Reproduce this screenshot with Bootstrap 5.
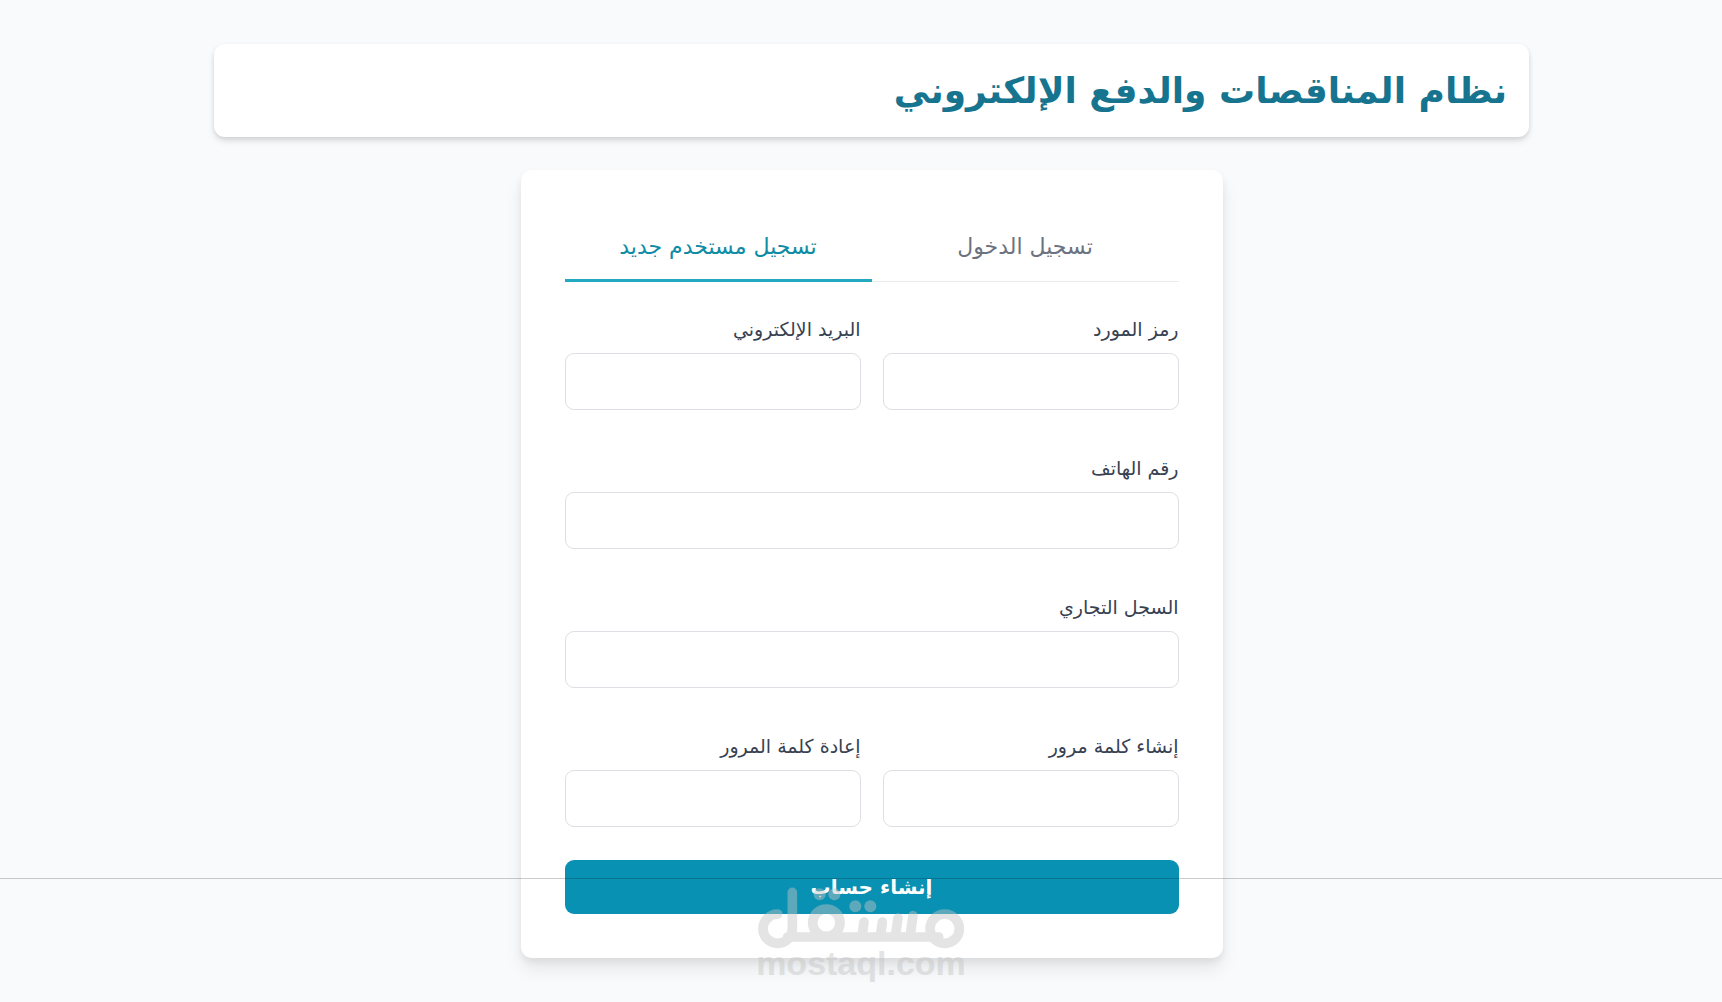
<!DOCTYPE html>
<html lang="ar" dir="rtl">
<head>
<meta charset="utf-8">
<meta name="viewport" content="width=device-width, initial-scale=1">
<title>نظام المناقصات والدفع الإلكتروني</title>
<link rel="stylesheet" href="https://cdn.jsdelivr.net/npm/bootstrap@5.3.0/dist/css/bootstrap.min.css">
<style>
body { background: #f8fafc; color: #374151; font-family: "DejaVu Sans", sans-serif; padding-left: 21px; }
.page-shell { max-width: 1315px; padding: 44px 0; }
.site-head { padding: 16px 22px; border-radius: 11px; margin-bottom: 33px; box-shadow: 0 4px 7px rgba(0,0,0,.1), 0 2px 4px rgba(0,0,0,.08); }
.site-title { color: #16748f; font-size: 36px; line-height: 61px; font-weight: 700; }
.auth-card { max-width: 702px; padding: 44px; border-radius: 11px; box-shadow: 0 11px 17px rgba(0,0,0,.08), 0 4px 7px rgba(0,0,0,.06); }
.auth-tabs { border-bottom: 1px solid #e9ebee; margin-bottom: 33px; }
.auth-tabs .nav-link { color: #6b7280; background: none; font-size: 22px; line-height: 31px; padding: 17px 0; margin-bottom: -1px; border: 0; border-bottom: 3px solid transparent; border-radius: 0; }
.auth-tabs .nav-link.active { color: #0e8ba5; background: none; border-bottom-color: #22a9c0; }
.fields { --bs-gutter-x: 22px; --bs-gutter-y: 44px; }
.fields .form-label { font-size: 19px; line-height: 28px; margin-bottom: 10px; color: #374151; }
.fields .form-control { height: 57px; border-color: #dcdfe3; border-radius: 9px; }
.btn-create { --bs-btn-color: #fff; --bs-btn-bg: #0891b2; --bs-btn-hover-color: #fff; --bs-btn-hover-bg: #0e7490; margin-top: 33px; padding: 12px; border: 0; border-radius: 9px; font-size: 20px; line-height: 30px; font-weight: 700; }
.stamp { top: 878px; border-top: 1px solid rgba(0,0,0,.2); pointer-events: none; }
.stamp-ink { opacity: .45; color: #c4c4c4; margin-top: 8px; }
.stamp-name { font: 700 34px/36px "Liberation Sans", sans-serif; margin-top: -4px; }
</style>
<script src="https://cdn.jsdelivr.net/npm/bootstrap@5.3.0/dist/js/bootstrap.bundle.min.js" defer></script>
</head>
<body class="position-relative">
<div class="page-shell mx-auto">
  <header class="site-head bg-white">
    <h1 class="site-title mb-0">نظام المناقصات والدفع الإلكتروني</h1>
  </header>
  <main class="auth-card bg-white mx-auto">
    <div class="auth-tabs nav nav-justified" role="tablist">
      <button class="nav-link flex-fill w-50" type="button" role="tab" aria-selected="false">تسجيل الدخول</button>
      <button class="nav-link active flex-fill w-50" type="button" role="tab" aria-selected="true">تسجيل مستخدم جديد</button>
    </div>
    <form>
      <div class="row fields">
        <div class="col-6">
          <label class="form-label d-block" for="supplier">رمز المورد</label>
          <input class="form-control" id="supplier" type="text">
        </div>
        <div class="col-6">
          <label class="form-label d-block" for="email">البريد الإلكتروني</label>
          <input class="form-control" id="email" type="email">
        </div>
        <div class="col-12">
          <label class="form-label d-block" for="phone">رقم الهاتف</label>
          <input class="form-control" id="phone" type="tel">
        </div>
        <div class="col-12">
          <label class="form-label d-block" for="registry">السجل التجاري</label>
          <input class="form-control" id="registry" type="text">
        </div>
        <div class="col-6">
          <label class="form-label d-block" for="pass">إنشاء كلمة مرور</label>
          <input class="form-control" id="pass" type="password">
        </div>
        <div class="col-6">
          <label class="form-label d-block" for="pass2">إعادة كلمة المرور</label>
          <input class="form-control" id="pass2" type="password">
        </div>
      </div>
      <button class="btn btn-create w-100" type="submit">إنشاء حساب</button>
    </form>
  </main>
</div>
<div class="stamp position-absolute start-0 w-100">
  <div class="stamp-ink d-flex flex-column align-items-center" dir="ltr">
    <svg width="208" height="62" viewBox="170 140 624 186" fill="none" stroke="currentColor" stroke-width="29" stroke-linecap="round" stroke-linejoin="round" aria-hidden="true">
      <circle cx="733" cy="265" r="44"/>
      <path d="M232 221A44 44 0 1 0 276 265V156M262 290H715"/>
      <circle cx="378" cy="247" r="41"/>
      <path d="M491 245L485 288M546 245L540 288M593 233L585 288M638 226L629 288"/>
      <g fill="currentColor" stroke="none"><circle cx="358" cy="162" r="18"/><circle cx="402" cy="162" r="18"/><circle cx="465" cy="198" r="18"/><circle cx="510" cy="198" r="18"/></g>
    </svg>
    <div class="stamp-name">mostaql.com</div>
  </div>
</div>
</body>
</html>
